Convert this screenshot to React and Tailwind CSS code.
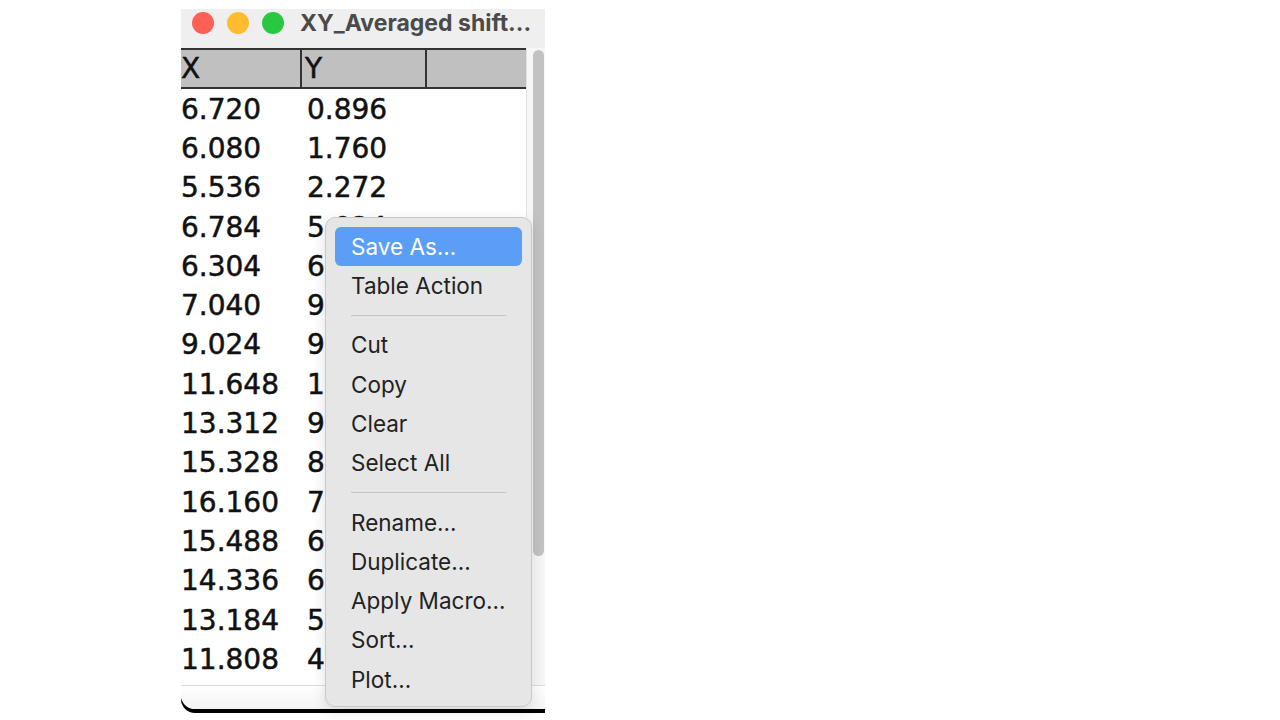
import React from 'react';

const rows = [
  ['6.720', '0.896'],
  ['6.080', '1.760'],
  ['5.536', '2.272'],
  ['6.784', '5.024'],
  ['6.304', '6.144'],
  ['7.040', '9.088'],
  ['9.024', '9.760'],
  ['11.648', '10.432'],
  ['13.312', '9.856'],
  ['15.328', '8.736'],
  ['16.160', '7.200'],
  ['15.488', '6.624'],
  ['14.336', '6.016'],
  ['13.184', '5.440'],
  ['11.808', '4.896'],
];

const menu = [
  { label: 'Save As...', active: true },
  { label: 'Table Action' },
  { sep: true },
  { label: 'Cut' },
  { label: 'Copy' },
  { label: 'Clear' },
  { label: 'Select All' },
  { sep: true },
  { label: 'Rename...' },
  { label: 'Duplicate...' },
  { label: 'Apply Macro...' },
  { label: 'Sort...' },
  { label: 'Plot...' },
];

const ContextMenu = () => (
  <div className="absolute left-[144px] top-[208px] w-[207px] h-[490px] rounded-[10px] bg-[#e6e6e6] border border-[#c9c9c9] shadow-[0_4px_14px_rgba(0,0,0,0.12)] px-[9px] pt-[9px] font-['Inter',sans-serif] text-[22.5px] text-[#222]">
    {menu.map((item, i) =>
      item.sep ? (
        <div key={i} className="h-[20px] flex items-center px-[16px]">
          <div className="w-full h-px bg-[#c6c6c6]" />
        </div>
      ) : (
        <div
          key={i}
          className={
            item.active
              ? 'h-[39.3px] flex items-center pl-[16px] rounded-[6px] bg-[#5a9ef8] text-white'
              : 'h-[39.3px] flex items-center pl-[16px]'
          }
        >
          {item.label}
        </div>
      )
    )}
  </div>
);

export default function App() {
  return (
    <div className="w-[1280px] h-[720px] bg-white overflow-hidden pt-[9px] pl-[181px]">
      <div className="relative w-[364px] bg-black rounded-bl-[14px] pb-[4px]">
        <div className="bg-white rounded-bl-[14px] overflow-hidden">
          {/* Title bar */}
          <div className="h-[39px] bg-[#efefef] flex items-start pt-[3px]">
            <div className="flex items-center gap-[13px] ml-[11px] h-[22px]">
              <span className="w-[22px] h-[22px] rounded-full bg-[#fe5f57]" />
              <span className="w-[22px] h-[22px] rounded-full bg-[#febc2e]" />
              <span className="w-[22px] h-[22px] rounded-full bg-[#28c840]" />
            </div>
            <span className="ml-[16px] h-[22px] flex items-center font-['Inter',sans-serif] font-bold text-[23px] text-[#4a4a4a] whitespace-nowrap">
              XY_Averaged shift...
            </span>
          </div>

          {/* Table + scrollbar */}
          <div className="flex h-[637px]">
            <div className="w-[345px] font-['DejaVu_Sans',sans-serif] text-[28px] text-[#111] [-webkit-text-stroke:0.5px_#111]">
              <div className="h-[41px] flex bg-[#c0c0c0] border-y-2 border-[#333]">
                <div className="w-[121px] border-r-2 border-[#333] flex items-center leading-none">X</div>
                <div className="w-[125px] border-r-2 border-[#333] flex items-center pl-[3px] leading-none">Y</div>
                <div className="flex-1" />
              </div>
              <div className="pt-[1px]">
                {rows.map(([x, y], i) => (
                  <div key={i} className="h-[39.3px] flex items-center leading-none">
                    <div className="w-[126px]">{x}</div>
                    <div>{y}</div>
                  </div>
                ))}
              </div>
            </div>
            <div className="w-[19px] bg-[#f6f6f6] border-l border-[#e3e3e3] pl-[6px] pt-[2px]">
              <div className="w-[11px] h-[506px] rounded-full bg-[#c2c2c2]" />
            </div>
          </div>

          {/* Bottom strip */}
          <div className="h-[24px] border-t border-[#dcdcdc] bg-gradient-to-b from-white to-[#f3f3f3]" />
        </div>

        <ContextMenu />
      </div>
    </div>
  );
}
